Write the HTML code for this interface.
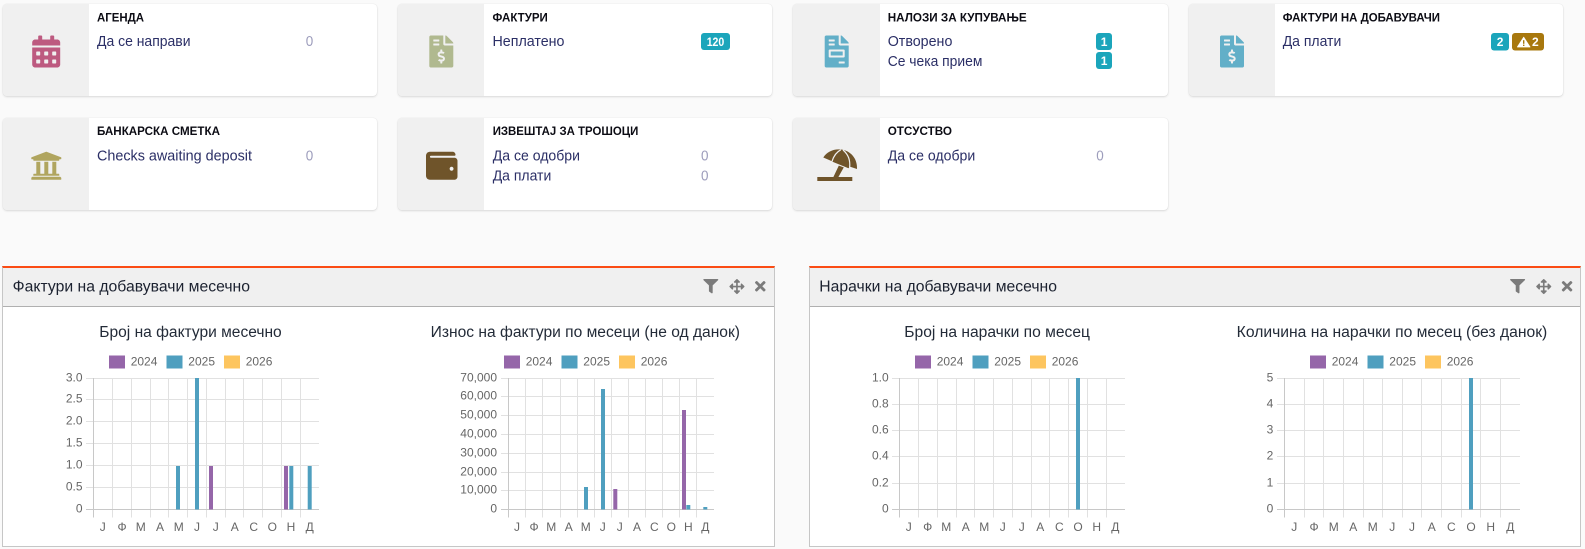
<!DOCTYPE html>
<html><head><meta charset="utf-8"><title>Dashboard</title>
<style>
html,body{margin:0;padding:0;background:#fafafa;width:1585px;height:549px;overflow:hidden}
.c{position:absolute;width:373.5px;height:92px;background:#fff;border-radius:4px;box-shadow:0 1px 2px rgba(0,0,0,.12),0 0 1px rgba(0,0,0,.12);overflow:hidden}
.c i{display:block;width:86px;height:92px;background:#f0f0f0}
.p{position:absolute;top:266px;height:278px;background:#fff;border:1px solid #c6c6c6;border-top:2px solid #fb4c14;box-sizing:content-box}
.p b{display:block;height:38px;background:#f0f0f0;border-bottom:1px solid #b0b0b0}
svg{position:absolute;left:0;top:0}
text{font-family:"Liberation Sans","Noto Sans CJK SC",sans-serif}
.t{font-size:12px;font-weight:700;fill:#0c0c14}
.r{font-size:14.5px;fill:#2b2f66}
.z{font-size:14.5px;fill:#9d9dbc}
.b{font-size:12px;font-weight:700;fill:#fff}
.h{font-size:15.5px;fill:#1c2230}
.ct{font-size:15.5px;fill:#232b38}
.l{font-size:12px;fill:#666}
.y{font-size:12px;fill:#666;text-anchor:end;transform:translateY(-1px)}
.x{font-size:12px;fill:#666;text-anchor:middle}
.g{stroke:#e1e1e1;stroke-width:1;fill:none}
.a{stroke:#c8c8c8;stroke-width:1;fill:none}
.pu{fill:#9566a9}.bl{fill:#4f9fbf}.or{fill:#fdc55f}
.ic{fill:#7b7b7b}
</style></head><body>
<div class="c" style="left:3px;top:4px"><i></i></div>
<div class="c" style="left:398px;top:4px;width:374px"><i></i></div>
<div class="c" style="left:793px;top:4px;width:374.5px"><i style="width:87px"></i></div>
<div class="c" style="left:1189px;top:4px"><i></i></div>
<div class="c" style="left:3px;top:118px"><i></i></div>
<div class="c" style="left:398px;top:118px;width:374px"><i></i></div>
<div class="c" style="left:793px;top:118px;width:374.5px"><i style="width:87px"></i></div>
<div class="p" style="left:2px;width:771px"><b></b></div>
<div class="p" style="left:809px;width:770px"><b></b></div>
<svg width="1585" height="549" viewBox="0 0 1585 549" xmlns="http://www.w3.org/2000/svg">
<defs>
<path id="inv$" d="M377 105L279.1 7c-4.5-4.5-10.6-7-17-7H256v128h128v-6.1c0-6.3-2.5-12.4-7-16.9zm-153 31V0H24C10.7 0 0 10.7 0 24v464c0 13.3 10.7 24 24 24h336c13.3 0 24-10.7 24-24V160H248c-13.2 0-24-10.8-24-24zM64 72c0-4.42 3.58-8 8-8h80c4.42 0 8 3.58 8 8v16c0 4.42-3.58 8-8 8H72c-4.42 0-8-3.58-8-8V72zm0 80v-16c0-4.42 3.58-8 8-8h80c4.42 0 8 3.58 8 8v16c0 4.42-3.58 8-8 8H72c-4.42 0-8-3.58-8-8zm144 263.88V440c0 4.42-3.58 8-8 8h-16c-4.42 0-8-3.58-8-8v-24.29c-11.29-.58-22.27-4.52-31.37-11.35-3.9-2.93-4.1-8.77-.57-12.14l11.75-11.21c2.77-2.64 6.89-2.76 10.13-.73 3.87 2.42 8.26 3.72 12.82 3.72h28.11c6.5 0 11.8-5.92 11.8-13.19 0-5.95-3.61-11.19-8.77-12.73l-45-13.5c-18.59-5.58-31.58-23.42-31.58-43.39 0-24.52 19.05-44.44 42.67-45.07V232c0-4.42 3.58-8 8-8h16c4.42 0 8 3.58 8 8v24.29c11.29.58 22.27 4.51 31.37 11.35 3.9 2.93 4.1 8.77.57 12.14l-11.75 11.21c-2.77 2.64-6.89 2.76-10.13.73-3.87-2.43-8.26-3.72-12.82-3.72h-28.11c-6.5 0-11.8 5.92-11.8 13.19 0 5.95 3.61 11.19 8.77 12.73l45 13.5c18.59 5.58 31.58 23.42 31.58 43.39 0 24.53-19.05 44.44-42.67 45.07z"/>
<g id="tools">
<path transform="translate(703.3 279) scale(.0293 .028)" d="M487.976 0H24.028C2.71 0-8.047 25.866 7.058 40.971L192 225.941V432c0 7.831 3.821 15.17 10.237 19.662l80 55.98C298.02 518.69 320 507.493 320 487.98V225.941l184.947-184.97C520.021 25.896 509.338 0 487.976 0z"/>
<path transform="translate(729.4 279) scale(.0295)" d="M352.201 425.775l-79.196 79.196c-9.373 9.373-24.568 9.373-33.941 0l-79.196-79.196c-15.119-15.119-4.411-40.971 16.971-40.97h51.162L228 284H127.196v51.162c0 21.382-25.851 32.09-40.971 16.971L7.029 272.937c-9.373-9.373-9.373-24.569 0-33.941L86.225 159.8c15.119-15.119 40.971-4.411 40.971 16.971V228H228V127.196h-51.23c-21.382 0-32.09-25.851-16.971-40.971l79.196-79.196c9.373-9.373 24.568-9.373 33.941 0l79.196 79.196c15.119 15.119 4.411 40.971-16.971 40.971h-51.162V228h100.804v-51.162c0-21.382 25.851-32.09 40.97-16.971l79.196 79.196c9.373 9.373 9.373 24.569 0 33.941L425.773 352.2c-15.119 15.119-40.971 4.411-40.97-16.971V284H284v100.804h51.23c21.382 0 32.09 25.851 16.971 40.971z"/>
<path transform="translate(755 278.6) scale(.03)" d="M242.72 256l100.07-100.07c12.28-12.28 12.28-32.19 0-44.48l-22.24-22.24c-12.28-12.28-32.19-12.28-44.48 0L176 189.28 75.93 89.21c-12.28-12.28-32.19-12.28-44.48 0L9.21 111.45c-12.28 12.28-12.28 32.19 0 44.48L109.28 256 9.21 356.07c-12.28 12.28-12.28 32.19 0 44.48l22.24 22.24c12.28 12.28 32.2 12.28 44.48 0L176 322.72l100.07 100.07c12.28 12.28 32.2 12.28 44.48 0l22.24-22.24c12.28-12.28 12.28-32.19 0-44.48L242.72 256z"/>
</g>
</defs>

<!-- card icons -->
<path fill="#bd5a80" transform="translate(32.2 35.5) scale(.0625)" d="M0 464c0 26.5 21.5 48 48 48h352c26.5 0 48-21.5 48-48V192H0v272zm320-196c0-6.6 5.4-12 12-12h40c6.6 0 12 5.4 12 12v40c0 6.6-5.4 12-12 12h-40c-6.6 0-12-5.4-12-12v-40zm0 128c0-6.6 5.4-12 12-12h40c6.6 0 12 5.4 12 12v40c0 6.6-5.4 12-12 12h-40c-6.6 0-12-5.4-12-12v-40zM192 268c0-6.6 5.4-12 12-12h40c6.6 0 12 5.4 12 12v40c0 6.6-5.4 12-12 12h-40c-6.6 0-12-5.4-12-12v-40zm0 128c0-6.6 5.4-12 12-12h40c6.6 0 12 5.4 12 12v40c0 6.6-5.4 12-12 12h-40c-6.6 0-12-5.4-12-12v-40zM64 268c0-6.6 5.4-12 12-12h40c6.6 0 12 5.4 12 12v40c0 6.6-5.4 12-12 12H76c-6.6 0-12-5.4-12-12v-40zm0 128c0-6.6 5.4-12 12-12h40c6.6 0 12 5.4 12 12v40c0 6.6-5.4 12-12 12H76c-6.6 0-12-5.4-12-12v-40zM400 64h-48V16c0-8.8-7.2-16-16-16h-32c-8.8 0-16 7.2-16 16v48H160V16c0-8.8-7.2-16-16-16h-32c-8.8 0-16 7.2-16 16v48H48C21.5 64 0 85.5 0 112v48h448v-48c0-26.5-21.5-48-48-48z"/>
<use href="#inv$" fill="#b0b98f" transform="translate(429.3 35.5) scale(.0625)"/>
<path fill="#62afc8" transform="translate(824.7 35.5) scale(.0625)" d="M288 256H96v64h192v-64zm89-151L279.1 7c-4.5-4.5-10.6-7-17-7H256v128h128v-6.1c0-6.3-2.5-12.4-7-16.9zm-153 31V0H24C10.7 0 0 10.7 0 24v464c0 13.3 10.7 24 24 24h336c13.3 0 24-10.7 24-24V160H248c-13.2 0-24-10.8-24-24zM64 72c0-4.42 3.58-8 8-8h80c4.42 0 8 3.58 8 8v16c0 4.42-3.58 8-8 8H72c-4.42 0-8-3.58-8-8V72zm0 64c0-4.42 3.58-8 8-8h80c4.42 0 8 3.58 8 8v16c0 4.42-3.58 8-8 8H72c-4.42 0-8-3.58-8-8v-16zm256 304c0 4.42-3.58 8-8 8h-80c-4.42 0-8-3.58-8-8v-16c0-4.42 3.58-8 8-8h80c4.42 0 8 3.58 8 8v16zm0-200v96c0 8.84-7.16 16-16 16H80c-8.84 0-16-7.16-16-16v-96c0-8.84 7.16-16 16-16h224c8.84 0 16 7.16 16 16z"/>
<use href="#inv$" fill="#62afc8" transform="translate(1220 35.5) scale(.0625)"/>
<path fill="#b0a55f" transform="translate(30.3 149.7) scale(.0625)" d="M496 128v16a8 8 0 0 1-8 8h-24v12c0 6.627-5.373 12-12 12H60c-6.627 0-12-5.373-12-12v-12H24a8 8 0 0 1-8-8v-16a8 8 0 0 1 4.941-7.392l232-88a7.996 7.996 0 0 1 6.118 0l232 88A8 8 0 0 1 496 128zm-24 304H40c-13.255 0-24 10.745-24 24v16a8 8 0 0 0 8 8h464a8 8 0 0 0 8-8v-16c0-13.255-10.745-24-24-24zM96 192v192H60c-6.627 0-12 5.373-12 12v20h416v-20c0-6.627-5.373-12-12-12h-36V192h-64v192h-64V192h-64v192h-64V192H96z"/>
<path fill="#6f542a" transform="translate(426 149.7) scale(.0615 .0625)" d="M461.2 128H80c-8.84 0-16-7.16-16-16s7.16-16 16-16h384c8.84 0 16-7.16 16-16 0-26.51-21.49-48-48-48H64C28.65 32 0 60.65 0 96v320c0 35.35 28.65 64 64 64h397.2c28.02 0 50.8-21.53 50.8-48V176c0-26.47-22.78-48-50.8-48zM416 336c-17.67 0-32-14.33-32-32s14.33-32 32-32 32 14.33 32 32-14.33 32-32 32z"/>
<g fill="#6f542a">
<path d="M823.3 157.5C827 151.5 834 148.6 841 149.5C850 150.5 857.6 158 857 169L849.8 166.6L848.5 168.2L832.5 161.8L831.4 161Z"/>
<path d="M838.8 165.6L843.8 167.4L838.4 177H833.4Z"/>
<rect x="817.3" y="177" width="35" height="4"/>
</g>
<path d="M832 161.5C833.5 156.5 836.5 152 840.8 149.8M849.6 167.5C850.4 161 848.4 154.5 843 150" fill="none" stroke="#f0f0f0" stroke-width="1.2"/>

<!-- card text -->
<text class="t" x="97" y="21.3" textLength="47" lengthAdjust="spacingAndGlyphs">АГЕНДА</text>
<text class="r" x="97" y="46" textLength="93.5" lengthAdjust="spacingAndGlyphs">Да се направи</text>
<text class="z" x="305.7" y="46" textLength="7.5" lengthAdjust="spacingAndGlyphs">0</text>

<text class="t" x="492.5" y="21.3" textLength="55.3" lengthAdjust="spacingAndGlyphs">ФАКТУРИ</text>
<text class="r" x="492.5" y="46" textLength="72" lengthAdjust="spacingAndGlyphs">Неплатено</text>
<rect x="701" y="33" width="29" height="17" rx="3" fill="#1ba5bb"/>
<text class="b" x="706.7" y="46" textLength="17.6" lengthAdjust="spacingAndGlyphs">120</text>

<text class="t" x="887.7" y="21.3" textLength="139" lengthAdjust="spacingAndGlyphs">НАЛОЗИ ЗА КУПУВАЊЕ</text>
<text class="r" x="887.7" y="46" textLength="64.7" lengthAdjust="spacingAndGlyphs">Отворено</text>
<text class="r" x="887.7" y="66" textLength="94.7" lengthAdjust="spacingAndGlyphs">Се чека прием</text>
<rect x="1096" y="33" width="16" height="17" rx="3" fill="#1ba5bb"/>
<text class="b" x="1100.7" y="46">1</text>
<rect x="1096" y="52" width="16" height="17" rx="3" fill="#1ba5bb"/>
<text class="b" x="1100.7" y="65">1</text>

<text class="t" x="1282.7" y="21.3" textLength="157.3" lengthAdjust="spacingAndGlyphs">ФАКТУРИ НА ДОБАВУВАЧИ</text>
<text class="r" x="1282.7" y="46" textLength="58.6" lengthAdjust="spacingAndGlyphs">Да плати</text>
<rect x="1491" y="33" width="18" height="17.5" rx="3" fill="#1ba5bb"/>
<text class="b" x="1496.8" y="46">2</text>
<rect x="1512" y="33" width="32" height="17.5" rx="3" fill="#a8780e"/>
<path d="M1523.7 37.2L1530 47H1517.4Z" fill="#fff" stroke="#fff" stroke-width=".8" stroke-linejoin="round"/>
<rect x="1523" y="40.2" width="1.4" height="3.6" fill="#a8780e"/><rect x="1523" y="44.6" width="1.4" height="1.4" fill="#a8780e"/>
<text class="b" x="1532" y="46">2</text>

<text class="t" x="97" y="135" textLength="123" lengthAdjust="spacingAndGlyphs">БАНКАРСКА СМЕТКА</text>
<text class="r" x="97" y="160.7" textLength="155" lengthAdjust="spacingAndGlyphs">Checks awaiting deposit</text>
<text class="z" x="305.7" y="160.7" textLength="7.5" lengthAdjust="spacingAndGlyphs">0</text>

<text class="t" x="492.7" y="135" textLength="145.6" lengthAdjust="spacingAndGlyphs">ИЗВЕШТАЈ ЗА ТРОШОЦИ</text>
<text class="r" x="492.7" y="160.7" textLength="87.3" lengthAdjust="spacingAndGlyphs">Да се одобри</text>
<text class="r" x="492.7" y="180.3" textLength="58.6" lengthAdjust="spacingAndGlyphs">Да плати</text>
<text class="z" x="701" y="160.7" textLength="7.5" lengthAdjust="spacingAndGlyphs">0</text>
<text class="z" x="701" y="180.3" textLength="7.5" lengthAdjust="spacingAndGlyphs">0</text>

<text class="t" x="887.7" y="135" textLength="64.3" lengthAdjust="spacingAndGlyphs">ОТСУСТВО</text>
<text class="r" x="887.7" y="160.7" textLength="87.6" lengthAdjust="spacingAndGlyphs">Да се одобри</text>
<text class="z" x="1096.3" y="160.7" textLength="7.5" lengthAdjust="spacingAndGlyphs">0</text>

<!-- panel heads -->
<text class="h" x="12.7" y="291.5" textLength="237.3" lengthAdjust="spacingAndGlyphs">Фактури на добавувачи месечно</text>
<text class="h" x="819.3" y="291.5" textLength="237.7" lengthAdjust="spacingAndGlyphs">Нарачки на добавувачи месечно</text>
<use href="#tools" class="ic"/>
<use href="#tools" class="ic" transform="translate(806.8 0)"/>

<!-- chart titles -->
<text class="ct" x="99.3" y="337" textLength="182.4" lengthAdjust="spacingAndGlyphs">Број на фактури месечно</text>
<text class="ct" x="430.7" y="337" textLength="309.3" lengthAdjust="spacingAndGlyphs">Износ на фактури по месеци (не од данок)</text>
<text class="ct" x="904.3" y="337" textLength="185.7" lengthAdjust="spacingAndGlyphs">Број на нарачки по месец</text>
<text class="ct" x="1236.7" y="337" textLength="310.6" lengthAdjust="spacingAndGlyphs">Количина на нарачки по месец (без данок)</text>

<!-- legends -->
<g id="leg">
<rect class="pu" x="109" y="355.5" width="16" height="13"/><text class="l" x="130.7" y="365.3">2024</text>
<rect class="bl" x="166.5" y="355.5" width="16" height="13"/><text class="l" x="188.3" y="365.3">2025</text>
<rect class="or" x="224" y="355.5" width="16" height="13"/><text class="l" x="245.7" y="365.3">2026</text>
</g>
<g transform="translate(395 0)">
<rect class="pu" x="109" y="355.5" width="16" height="13"/><text class="l" x="130.7" y="365.3">2024</text>
<rect class="bl" x="166.5" y="355.5" width="16" height="13"/><text class="l" x="188.3" y="365.3">2025</text>
<rect class="or" x="224" y="355.5" width="16" height="13"/><text class="l" x="245.7" y="365.3">2026</text>
</g>
<g transform="translate(806 0)">
<rect class="pu" x="109" y="355.5" width="16" height="13"/><text class="l" x="130.7" y="365.3">2024</text>
<rect class="bl" x="166.5" y="355.5" width="16" height="13"/><text class="l" x="188.3" y="365.3">2025</text>
<rect class="or" x="224" y="355.5" width="16" height="13"/><text class="l" x="245.7" y="365.3">2026</text>
</g>
<g transform="translate(1201 0)">
<rect class="pu" x="109" y="355.5" width="16" height="13"/><text class="l" x="130.7" y="365.3">2024</text>
<rect class="bl" x="166.5" y="355.5" width="16" height="13"/><text class="l" x="188.3" y="365.3">2025</text>
<rect class="or" x="224" y="355.5" width="16" height="13"/><text class="l" x="245.7" y="365.3">2026</text>
</g>

<!-- chart 1 -->
<path class="g" d="M112.5 378V517.5M131.5 378V517.5M150.5 378V517.5M168.5 378V517.5M187.5 378V517.5M206.5 378V517.5M225.5 378V517.5M243.5 378V517.5M262.5 378V517.5M281.5 378V517.5M300.5 378V517.5M86 378.5H319M86 399.5H319M86 421.5H319M86 443.5H319M86 465.5H319M86 487.5H319"/>
<path class="a" d="M93.5 378V517.5M86 509.5H319"/>
<rect class="bl" x="176" y="466" width="4" height="43.5"/>
<rect class="bl" x="195" y="378" width="4" height="131.5"/>
<rect class="pu" x="209" y="466" width="4" height="43.5"/>
<rect class="pu" x="284" y="466" width="4" height="43.5"/>
<rect class="bl" x="289.3" y="466" width="4" height="43.5"/>
<rect class="bl" x="307.7" y="466" width="4" height="43.5"/>
<text class="y" x="82.5" y="382.5">3.0</text><text class="y" x="82.5" y="403.5">2.5</text><text class="y" x="82.5" y="425.5">2.0</text><text class="y" x="82.5" y="447.5">1.5</text><text class="y" x="82.5" y="469.5">1.0</text><text class="y" x="82.5" y="491.5">0.5</text><text class="y" x="82.5" y="513.5">0</text>
<text class="x" x="102.7" y="531">Ј</text><text class="x" x="122" y="531">Ф</text><text class="x" x="140.7" y="531">М</text><text class="x" x="160" y="531">А</text><text class="x" x="178.7" y="531">М</text><text class="x" x="197" y="531">Ј</text><text class="x" x="215.7" y="531">Ј</text><text class="x" x="234.7" y="531">А</text><text class="x" x="253.7" y="531">С</text><text class="x" x="272.3" y="531">О</text><text class="x" x="291" y="531">Н</text><text class="x" x="309.7" y="531">Д</text>

<!-- chart 2 -->
<path class="g" d="M525.5 378V517.5M542.5 378V517.5M560.5 378V517.5M577.5 378V517.5M594.5 378V517.5M611.5 378V517.5M628.5 378V517.5M645.5 378V517.5M662.5 378V517.5M679.5 378V517.5M696.5 378V517.5M501 378.5H714M501 396.5H714M501 415.5H714M501 434.5H714M501 453.5H714M501 472.5H714M501 490.5H714"/>
<path class="a" d="M508.5 378V517.5M501 509.5H714"/>
<rect class="bl" x="584" y="487" width="4" height="22.5"/>
<rect class="bl" x="601" y="389" width="4" height="120.5"/>
<rect class="pu" x="613.3" y="489" width="4" height="20.5"/>
<rect class="pu" x="682" y="410" width="4" height="99.5"/>
<rect class="bl" x="686.3" y="505" width="4" height="4.5"/>
<rect class="bl" x="703.3" y="507" width="4" height="2.5"/>
<text class="y" x="497" y="382.5">70,000</text><text class="y" x="497" y="400.5">60,000</text><text class="y" x="497" y="419.5">50,000</text><text class="y" x="497" y="438.5">40,000</text><text class="y" x="497" y="457.5">30,000</text><text class="y" x="497" y="476.5">20,000</text><text class="y" x="497" y="494.5">10,000</text><text class="y" x="497" y="513.5">0</text>
<text class="x" x="517" y="531">Ј</text><text class="x" x="534" y="531">Ф</text><text class="x" x="551.3" y="531">М</text><text class="x" x="568.7" y="531">А</text><text class="x" x="585.7" y="531">М</text><text class="x" x="602.7" y="531">Ј</text><text class="x" x="619.7" y="531">Ј</text><text class="x" x="637" y="531">А</text><text class="x" x="654.3" y="531">С</text><text class="x" x="671.3" y="531">О</text><text class="x" x="688.3" y="531">Н</text><text class="x" x="705.3" y="531">Д</text>

<!-- chart 3 -->
<path class="g" d="M918.5 378V517.5M937.5 378V517.5M956.5 378V517.5M974.5 378V517.5M993.5 378V517.5M1012.5 378V517.5M1031.5 378V517.5M1049.5 378V517.5M1068.5 378V517.5M1087.5 378V517.5M1106.5 378V517.5M892 378.5H1125M892 404.5H1125M892 430.5H1125M892 456.5H1125M892 483.5H1125"/>
<path class="a" d="M899.5 378V517.5M892 509.5H1125"/>
<rect class="bl" x="1076" y="378" width="4" height="131.5"/>
<text class="y" x="888.7" y="382.5">1.0</text><text class="y" x="888.7" y="408.5">0.8</text><text class="y" x="888.7" y="434.5">0.6</text><text class="y" x="888.7" y="460.5">0.4</text><text class="y" x="888.7" y="487.5">0.2</text><text class="y" x="888.7" y="513.5">0</text>
<text class="x" x="908.7" y="531">Ј</text><text class="x" x="927.7" y="531">Ф</text><text class="x" x="946.3" y="531">М</text><text class="x" x="965.7" y="531">А</text><text class="x" x="984.3" y="531">М</text><text class="x" x="1002.7" y="531">Ј</text><text class="x" x="1021.7" y="531">Ј</text><text class="x" x="1040.3" y="531">А</text><text class="x" x="1059.3" y="531">С</text><text class="x" x="1078" y="531">О</text><text class="x" x="1096.7" y="531">Н</text><text class="x" x="1115.3" y="531">Д</text>

<!-- chart 4 -->
<path class="g" d="M1304.5 378V517.5M1323.5 378V517.5M1343.5 378V517.5M1363.5 378V517.5M1382.5 378V517.5M1402.5 378V517.5M1421.5 378V517.5M1441.5 378V517.5M1461.5 378V517.5M1480.5 378V517.5M1500.5 378V517.5M1277 378.5H1520M1277 404.5H1520M1277 430.5H1520M1277 456.5H1520M1277 483.5H1520"/>
<path class="a" d="M1284.5 378V517.5M1277 509.5H1520"/>
<rect class="bl" x="1469" y="378" width="4" height="131.5"/>
<text class="y" x="1273.3" y="382.5">5</text><text class="y" x="1273.3" y="408.5">4</text><text class="y" x="1273.3" y="434.5">3</text><text class="y" x="1273.3" y="460.5">2</text><text class="y" x="1273.3" y="487.5">1</text><text class="y" x="1273.3" y="513.5">0</text>
<text class="x" x="1294.3" y="531">Ј</text><text class="x" x="1314" y="531">Ф</text><text class="x" x="1333.7" y="531">М</text><text class="x" x="1353.3" y="531">А</text><text class="x" x="1372.7" y="531">М</text><text class="x" x="1392.3" y="531">Ј</text><text class="x" x="1412" y="531">Ј</text><text class="x" x="1431.7" y="531">А</text><text class="x" x="1451.3" y="531">С</text><text class="x" x="1471" y="531">О</text><text class="x" x="1490.7" y="531">Н</text><text class="x" x="1510.3" y="531">Д</text>
</svg>
</body></html>
